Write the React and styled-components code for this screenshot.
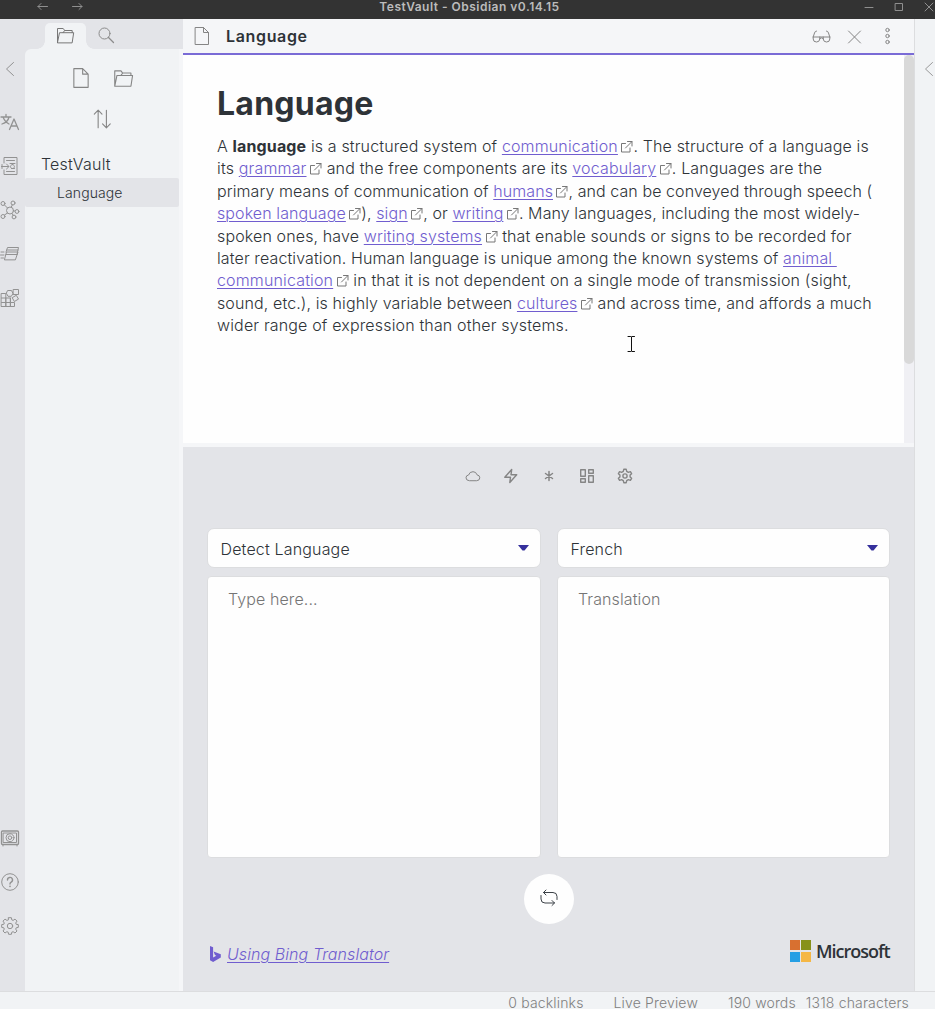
import React from "react";
import styled, { createGlobalStyle } from "styled-components";

const Global = createGlobalStyle`
  * { box-sizing: border-box; }
  body { margin: 0; background: #f1f3f5; overflow: hidden; }
  #root { height: 1009px; }
`;

const Window = styled.div`
  width: 935px;
  height: 1009px;
  display: flex;
  flex-direction: column;
  overflow: hidden;
  position: relative;
  font-family: Inter, "Liberation Sans", sans-serif;
  font-size: 16px;
  font-weight: 350;
  color: #2e3338;
`;

const TitleBar = styled.header`
  height: 19px;
  flex: none;
  display: flex;
  align-items: flex-start;
  background: #333;
  color: #8f8f8f;
`;

const TitleSide = styled.div`
  width: ${(p) => p.$w}px;
  height: 14px;
  display: flex;
  align-items: center;
  gap: ${(p) => p.$gap}px;
  padding-left: ${(p) => p.$pad}px;
`;

const TitleText = styled.div`
  flex: 1;
  text-align: center;
  font-size: 12px;
  line-height: 14px;
  font-weight: 600;
  letter-spacing: 0.49px;
  color: #bcbcbc;
  white-space: nowrap;
`;

const Icon = styled.svg`
  display: block;
  flex: none;
  fill: none;
  stroke: currentColor;
  stroke-width: ${(p) => p.$stroke || 1};
  stroke-linecap: round;
  stroke-linejoin: round;
`;

const Workspace = styled.div`
  flex: 1;
  min-height: 0;
  display: flex;
`;

const Ribbon = styled.nav`
  width: 25px;
  flex: none;
  display: flex;
  flex-direction: column;
  justify-content: space-between;
  background: #e3e4e8;
  color: #929292;
  padding: 40px 0 55px;
`;

const RibbonGroup = styled.div`
  display: flex;
  flex-direction: column;
  gap: 24px;
`;

const RibbonCollapse = styled.div`
  height: 20px;
  margin-bottom: 33px;
`;

const Sidebar = styled.aside`
  width: 158px;
  flex: none;
  display: flex;
  flex-direction: column;
  background: #e3e4e8;
`;

const SideTabs = styled.div`
  height: 30px;
  display: flex;
  align-items: flex-end;
  padding-left: 20px;
`;

const SideTab = styled.div`
  width: 41px;
  height: 26px;
  display: flex;
  align-items: center;
  justify-content: center;
  padding: 0 2px 2px 0;
  border-radius: 5px 5px 0 0;
  background: ${(p) => (p.$active ? "#f1f3f5" : "transparent")};
  color: ${(p) => (p.$active ? "#777" : "#8c8c8c")};
  position: relative;
  &::before, &::after {
    content: "";
    display: ${(p) => (p.$active ? "block" : "none")};
    position: absolute;
    bottom: 0;
    width: 8px;
    height: 8px;
  }
  &::before { left: -8px; background: radial-gradient(circle at 0 0, transparent 7.5px, #f1f3f5 8px); }
  &::after { right: -8px; background: radial-gradient(circle at 100% 0, transparent 7.5px, #f1f3f5 8px); }
`;

const SideBody = styled.div`
  flex: 1;
  background: #f1f3f5;
  border-top-left-radius: 6px;
  border-right: 4px solid #f5f6f8;
`;

const FileActions = styled.div`
  display: flex;
  flex-wrap: wrap;
  justify-content: center;
  gap: 19px 20px;
  padding: 18px 38px 0;
  color: #858585;
`;

const Vault = styled.div`
  margin-top: 21px;
  padding-left: 16px;
  height: 27px;
  line-height: 26px;
  letter-spacing: 0.2px;
`;

const FileRow = styled.div`
  height: 29px;
  padding-left: 32px;
  line-height: 30px;
  font-size: 14px;
  letter-spacing: 0.1px;
  background: #e3e4e8;
  border-radius: 2px;
`;

const Main = styled.main`
  width: 731px;
  flex: none;
  display: flex;
  flex-direction: column;
`;

const PaneHeader = styled.div`
  height: 36px;
  flex: none;
  display: flex;
  align-items: center;
  padding: 0 17.5px 0 9px;
  background: #f5f6f8;
  border-bottom: 2px solid #7a6bd6;
  color: #858585;
`;

const PaneTitle = styled.div`
  flex: 1;
  margin-left: 14px;
  font-weight: 600;
  letter-spacing: 0.65px;
  color: #2e3338;
`;

const PaneActions = styled.div`
  display: flex;
  gap: 14px;
`;

const Editor = styled.section`
  height: 388px;
  flex: none;
  display: flex;
  background: #fefefe;
`;

const Note = styled.article`
  flex: 1;
  padding: 30px 0 0 34px;
`;

const Heading = styled.h1`
  margin: 0;
  font-size: 32px;
  line-height: 38px;
  font-weight: 700;
  letter-spacing: 0.25px;
`;

const Paragraph = styled.p`
  margin: 12px 0 0;
  line-height: 22.4px;
  strong { font-weight: 700; }
`;

const Line = styled.span`
  display: block;
  white-space: pre;
  letter-spacing: ${(p) => p.$track ?? 0.15}px;
`;

const Anchor = styled.a`
  color: #705dcf;
  text-decoration: underline;
  text-decoration-thickness: 1px;
  text-underline-offset: 2px;
`;

const ExternalMark = styled(Icon)`
  display: inline-block;
  vertical-align: -2px;
  margin: 0 -1px 0 2.5px;
  color: #777;
`;

const ScrollTrack = styled.div`
  width: 10px;
  background: #f0f0f4;
`;

const ScrollThumb = styled.div`
  height: 309px;
  border-radius: 5px;
  background: #d9d9d9;
`;

const Translator = styled.section`
  flex: 1;
  display: flex;
  flex-direction: column;
  border-top: 4px solid #f5f6f8;
  background: #e3e4e8;
`;

const Toolbar = styled.div`
  display: flex;
  justify-content: center;
  gap: 22px;
  margin-top: 21px;
  color: #858585;
`;

const Columns = styled.div`
  display: grid;
  grid-template-columns: 334px 333px;
  grid-template-rows: 40px 282px;
  gap: 8px 16px;
  margin: 44px 0 0 24px;
`;

const Select = styled.div`
  display: flex;
  align-items: center;
  justify-content: space-between;
  padding: 2px 11.5px 0 12.5px;
  border: 1px solid #dcdddf;
  border-radius: 7px;
  background: #fefefe;
  letter-spacing: 0.16px;
`;

const Caret = styled.svg`
  display: block;
  margin-top: -3px;
  fill: #35309c;
`;

const TextBox = styled.div`
  padding: 11px 20px;
  border: 1px solid #dcdddf;
  border-radius: 4px;
  background: #fefefe;
  line-height: 22px;
  letter-spacing: 0.1px;
  color: #757575;
`;

const SwapButton = styled.div`
  width: 50px;
  height: 50px;
  margin: 16px auto 0;
  padding-bottom: 2px;
  display: flex;
  align-items: center;
  justify-content: center;
  border-radius: 50%;
  background: #fefefe;
  color: #3d4248;
`;

const Credits = styled.footer`
  display: flex;
  align-items: center;
  justify-content: space-between;
  margin-top: 14px;
  height: 26px;
  padding: 0 24px 0 26px;
`;

const Service = styled.div`
  display: flex;
  align-items: center;
  gap: 6px;
  padding-top: 5px;
  color: #705dcf;
  font-style: italic;
  letter-spacing: 0.08px;
`;

const Brand = styled.div`
  display: flex;
  align-items: center;
  gap: 5px;
`;

const BrandTiles = styled.div`
  display: grid;
  grid-template-columns: 10px 10px;
  grid-auto-rows: 10px;
  gap: 1.5px;
`;

const Tile = styled.i`
  background: ${(p) => p.$c};
`;

const BrandName = styled.span`
  font: 600 18px/24px "Open Sans", sans-serif;
  letter-spacing: -1px;
  width: 74px;
  white-space: nowrap;
`;

const RightRibbon = styled.aside`
  width: 21px;
  flex: none;
  border-left: 1px solid #dcdddf;
  padding: 43px 0 0 9px;
  background: #f1f3f5;
  color: #999;
`;

const StatusBar = styled.footer`
  height: 18px;
  flex: none;
  display: flex;
  justify-content: flex-end;
  padding: 5px 26px 0 0;
  border-top: 1px solid #dcdddf;
  background: #f1f3f5;
  font-size: 14px;
  line-height: 12px;
  letter-spacing: 0.16px;
  color: #808080;
`;

const Status = styled.span`
  margin-left: ${(p) => p.$gap}px;
  white-space: nowrap;
`;

const TextCursor = styled(Icon)`
  position: absolute;
  left: 626px;
  top: 335px;
  color: #111;
`;

const FolderShape = () => (
  <path d="M2.500 17.500V3.500h5.700l1.500 2h7.500v2.200M2.500 17.500l2-9.800h14.200L17.200 17.500ZM9.700 5.500 8 7.700" />
);
const PageShape = () => <path d="M3.500 1.500h8l5 5V18.500h-13ZM11.500 1.500v5h5" />;

function External() {
  return (
    <ExternalMark width="14" height="14" viewBox="0 0 14 14">
      <path d="M5.500 3.500H1.500v8.500h8.500V8M7.500 1.500h4.500v4.500M12 1.500 5.500 8" />
    </ExternalMark>
  );
}

function Link({ children, mark = true }) {
  return (
    <>
      <Anchor>{children}</Anchor>
      {mark && <External />}
    </>
  );
}

const ribbonTop = [
  <path d="M1 5h10M6 2.500V5M3 5q2 5 6 7M9 5q-1 5-7 7M9.500 17.500 14 7l4.500 10.500M11 14h6" strokeWidth="1.300" />,
  <path d="M4 7V1.500h13v17H4V14M6.500 4.500h8M10 7.500h5M6.500 15.500h8M11.500 12.500h3M1.500 10.500h7M6.500 8l2.500 2.500L6.500 13M2 8.500v4M12.500 8.500a2 2 0 1 1-.1 0" />,
  <><circle cx="10" cy="10.500" r="3.500" /><circle cx="3" cy="3.500" r="2" /><circle cx="13" cy="3" r="2" /><circle cx="17" cy="11.500" r="1.900" /><circle cx="3" cy="16.500" r="2" /><circle cx="14" cy="17" r="1.900" /><path d="m4.500 5 3 3M12.300 5l-1 2M13.500 11H15M7.500 13l-3 2M12 13.500l1.200 1.800" /></>,
  <path d="M6 8 7.500 3.500h11L17 10.500M7 6h11M4.500 15.500 6.500 8h11.500l-2.500 7.500ZM6 10.500h11M1 8h3M.5 11H4M1 14h2.500" />,
  <path d="M1.500 5.500h4.300v13H1.500ZM1.500 10h9v8.500M1.500 14.500h13v4h-13M10.300 10v8.500M5.800 10v8.500M13.500 1.500h5v5h-5ZM8 2.500h3.500l1.500 3-1.700 2.800H8L6.500 5.500ZM12.500 9.500l3.800-2.200 2.200 3.800-3.800 2.200Z" />,
];

const gearTeeth = "M8.600 1.700h2.800l.4 2.200 1.300.5 1.900-1.300 2 2-1.300 1.900.5 1.300 2.100.3v2.800l-2.100.4-.5 1.300 1.300 1.900-2 2-1.900-1.300-1.300.5-.4 2.100H8.600l-.4-2.100-1.300-.5L5 17l-2-2 1.300-1.900-.5-1.300-2.100-.4V8.600l2.100-.3.5-1.300L3 5.100l2-2 1.900 1.300 1.300-.5Z";

const ribbonBottom = [
  <><rect x="1.500" y="3" width="17" height="13.500" rx="1" strokeWidth="1.300" /><rect x="3.500" y="5" width="13" height="9.500" /><circle cx="10" cy="9.700" r="4" /><circle cx="10" cy="9.700" r="1.800" /><path d="M3 17v1M17 17v1" /></>,
  <><circle cx="10" cy="10" r="8.300" /><path d="M7.500 8a2.500 2.500 0 1 1 3.700 2.100Q10 10.800 10 12" strokeWidth="1.400" /><path d="M10 14.200v.2" strokeWidth="1.600" /></>,
  <><path d={gearTeeth} /><circle cx="10" cy="10" r="2.700" /></>,
];

export default function App() {
  return (
    <Window>
      <Global />
      <TitleBar>
        <TitleSide $w={99} $gap={24} $pad={37}>
          <Icon width="11" height="10" viewBox="0 0 11 10"><path d="M10.500 4.500H1M4 1.500l-3 3 3 3" /></Icon>
          <Icon width="11" height="10" viewBox="0 0 11 10"><path d="M.5 4.500H10M7 1.500l3 3-3 3" /></Icon>
        </TitleSide>
        <TitleText>TestVault - Obsidian v0.14.15</TitleText>
        <TitleSide $w={95} $gap={20} $pad={24}>
          <Icon width="10" height="10" viewBox="0 0 10 10"><path d="M1 5.500h8" /></Icon>
          <Icon width="10" height="10" viewBox="0 0 10 10"><path d="M1.500 1.500h7v7h-7Z" /></Icon>
          <Icon width="10" height="10" viewBox="0 0 10 10"><path d="m1 1 8 8M9 1 1 9" /></Icon>
        </TitleSide>
      </TitleBar>

      <Workspace>
        <Ribbon>
          <div>
            <RibbonCollapse>
              <Icon width="20" height="20" viewBox="0 0 20 20"><path d="M13.500 3.500 6.500 10l7 6.500" /></Icon>
            </RibbonCollapse>
            <RibbonGroup>
              {ribbonTop.map((shape, i) => (
                <Icon key={i} width="20" height="20" viewBox="0 0 20 20">{shape}</Icon>
              ))}
            </RibbonGroup>
          </div>
          <RibbonGroup>
            {ribbonBottom.map((shape, i) => (
              <Icon key={i} width="20" height="20" viewBox="0 0 20 20">{shape}</Icon>
            ))}
          </RibbonGroup>
        </Ribbon>

        <Sidebar>
          <SideTabs>
            <SideTab $active>
              <Icon width="20" height="20" viewBox="0 0 20 20"><FolderShape /></Icon>
            </SideTab>
            <SideTab>
              <Icon width="20" height="20" viewBox="0 0 20 20"><circle cx="8.500" cy="8.500" r="5.500" /><path d="m12.500 12.500 5 5" strokeWidth="1.300" /></Icon>
            </SideTab>
          </SideTabs>
          <SideBody>
            <FileActions>
              <Icon width="22" height="22" viewBox="0 0 20 20"><PageShape /></Icon>
              <Icon width="22" height="22" viewBox="0 0 20 20"><FolderShape /></Icon>
              <Icon width="22" height="22" viewBox="0 0 20 20"><path d="M6.500 18V2M3 5.500 6.500 2 10 5.500M14 2v16M10.500 14.500 14 18l3.500-3.500" /></Icon>
            </FileActions>
            <Vault>TestVault</Vault>
            <FileRow>Language</FileRow>
          </SideBody>
        </Sidebar>

        <Main>
          <PaneHeader>
            <Icon width="20" height="20" viewBox="0 0 20 20"><PageShape /></Icon>
            <PaneTitle>Language</PaneTitle>
            <PaneActions>
              <Icon width="19" height="19" viewBox="0 0 19 19"><path d="M1 10h17M4.500 4Q3 4 2.500 6L1.200 10v2q0 3 3.300 3 3 0 3.300-3v-2M14.500 4q1.500 0 2 2l1.300 4v2q0 3-3.300 3-3 0-3.300-3v-2M7.800 11.500q1.700-1.500 3.400 0" /></Icon>
              <Icon width="19" height="19" viewBox="0 0 19 19"><path d="m3.500 4 12 12M15.500 4l-12 12" /></Icon>
              <Icon width="19" height="19" viewBox="0 0 19 19"><circle cx="9.500" cy="3" r="1.700" /><circle cx="9.500" cy="9" r="1.700" /><circle cx="9.500" cy="15" r="1.700" /></Icon>
            </PaneActions>
          </PaneHeader>

          <Editor>
            <Note>
              <Heading>Language</Heading>
              <Paragraph>
                <Line $track={0.14}>A <strong>language</strong> is a structured system of <Link>communication</Link>. The structure of a language is</Line>
                <Line $track={0.16}>its <Link>grammar</Link> and the free components are its <Link>vocabulary</Link>. Languages are the</Line>
                <Line $track={0.08}>primary means of communication of <Link>humans</Link>, and can be conveyed through speech (</Line>
                <Line $track={0.1}><Link>spoken language</Link>), <Link>sign</Link>, or <Link>writing</Link>. Many languages, including the most widely-</Line>
                <Line $track={0.13}>spoken ones, have <Link>writing systems</Link> that enable sounds or signs to be recorded for</Line>
                <Line $track={0.11}>later reactivation. Human language is unique among the known systems of <Link mark={false}>{"animal "}</Link></Line>
                <Line $track={0.15}><Link>communication</Link> in that it is not dependent on a single mode of transmission (sight,</Line>
                <Line $track={0.11}>sound, etc.), is highly variable between <Link>cultures</Link> and across time, and affords a much</Line>
                <Line $track={0.16}>wider range of expression than other systems.</Line>
              </Paragraph>
            </Note>
            <ScrollTrack><ScrollThumb /></ScrollTrack>
          </Editor>

          <Translator>
            <Toolbar>
              <Icon width="16" height="16" viewBox="0 0 16 16"><path d="M4 12.700Q1 12.500 1 9.800 1 7.300 3.600 7 4.500 3.700 8 3.700q3.200 0 4 3.100 2.800.5 2.800 3 0 2.700-2.800 2.900Z" /></Icon>
              <Icon $stroke={1.4} width="16" height="16" viewBox="0 0 16 16"><path d="M8.700 1.500 1.800 9.200h5.700l-.7 5.300 6.900-7.700H8Z" /></Icon>
              <Icon $stroke={1.5} width="16" height="16" viewBox="0 0 16 16"><path d="M8 3.500v9M4.500 5.500l7 5M11.500 5.500l-7 5" /></Icon>
              <Icon $stroke={1.4} width="16" height="16" viewBox="0 0 16 16"><path d="M1.700 1.700h4.600v6.600H1.700ZM9.700 1.700h4.600v3.600H9.700ZM9.700 7.700h4.600v6.600H9.700ZM1.700 10.700h4.600v3.600H1.700Z" /></Icon>
              <Icon $stroke={1.4} width="16" height="16" viewBox="0 0 16 16"><path d="m6.800 1.300-.5 2-1.700 1-2-.6-1.200 2 1.500 1.400v1.800l-1.500 1.400 1.200 2 2-.6 1.700 1 .5 2h2.400l.5-2 1.700-1 2 .6 1.200-2-1.500-1.400V7.100l1.500-1.400-1.200-2-2 .6-1.700-1-.5-2Z" /><circle cx="8" cy="8" r="2.100" /></Icon>
            </Toolbar>
            <Columns>
              <Select>Detect Language<Caret width="11" height="6" viewBox="0 0 11 6"><path d="M0 0h11L6.500 5.500h-2Z" /></Caret></Select>
              <Select>French<Caret width="11" height="6" viewBox="0 0 11 6"><path d="M0 0h11L6.500 5.500h-2Z" /></Caret></Select>
              <TextBox>Type here...</TextBox>
              <TextBox>Translation</TextBox>
            </Columns>
            <SwapButton>
              <Icon width="20" height="20" viewBox="0 0 20 20"><path d="M7 2 4.500 4.500 7 7M4.500 4.500H14Q18 4.500 18 8.500v3M13 12.500l2.500 2.500-2.500 2.500M15.500 15H6Q2 15 2 11V7.500" /></Icon>
            </SwapButton>
            <Credits>
              <Service>
                <svg width="12" height="16" viewBox="0 0 12 16"><path fill="currentColor" d="M1 0 4.100 1.200V11.500L7.300 9.700 5.900 9 4.600 5.500l7.200 2.700v3.300L4.100 16 1 14.200Z" /></svg>
                <Anchor>Using Bing Translator</Anchor>
              </Service>
              <Brand>
                <BrandTiles>
                  <Tile $c="#d87030" /><Tile $c="#87911b" /><Tile $c="#259fe4" /><Tile $c="#f5b745" />
                </BrandTiles>
                <BrandName>Microsoft</BrandName>
              </Brand>
            </Credits>
          </Translator>
        </Main>

        <RightRibbon>
          <Icon width="11" height="14" viewBox="0 0 11 14"><path d="M8.500.5 1.500 7l7 6.500" /></Icon>
        </RightRibbon>
      </Workspace>

      <StatusBar>
        <Status $gap={0}>0 backlinks</Status>
        <Status $gap={30}>Live Preview</Status>
        <Status $gap={30}>190 words</Status>
        <Status $gap={10}>1318 characters</Status>
      </StatusBar>

      <TextCursor width="10" height="18" viewBox="0 0 10 18">
        <path d="M2 1.500h2.500M6 1.500h2.500M5.500 2v14M2 16.500h2.500M6 16.500h2.500" />
      </TextCursor>
    </Window>
  );
}
